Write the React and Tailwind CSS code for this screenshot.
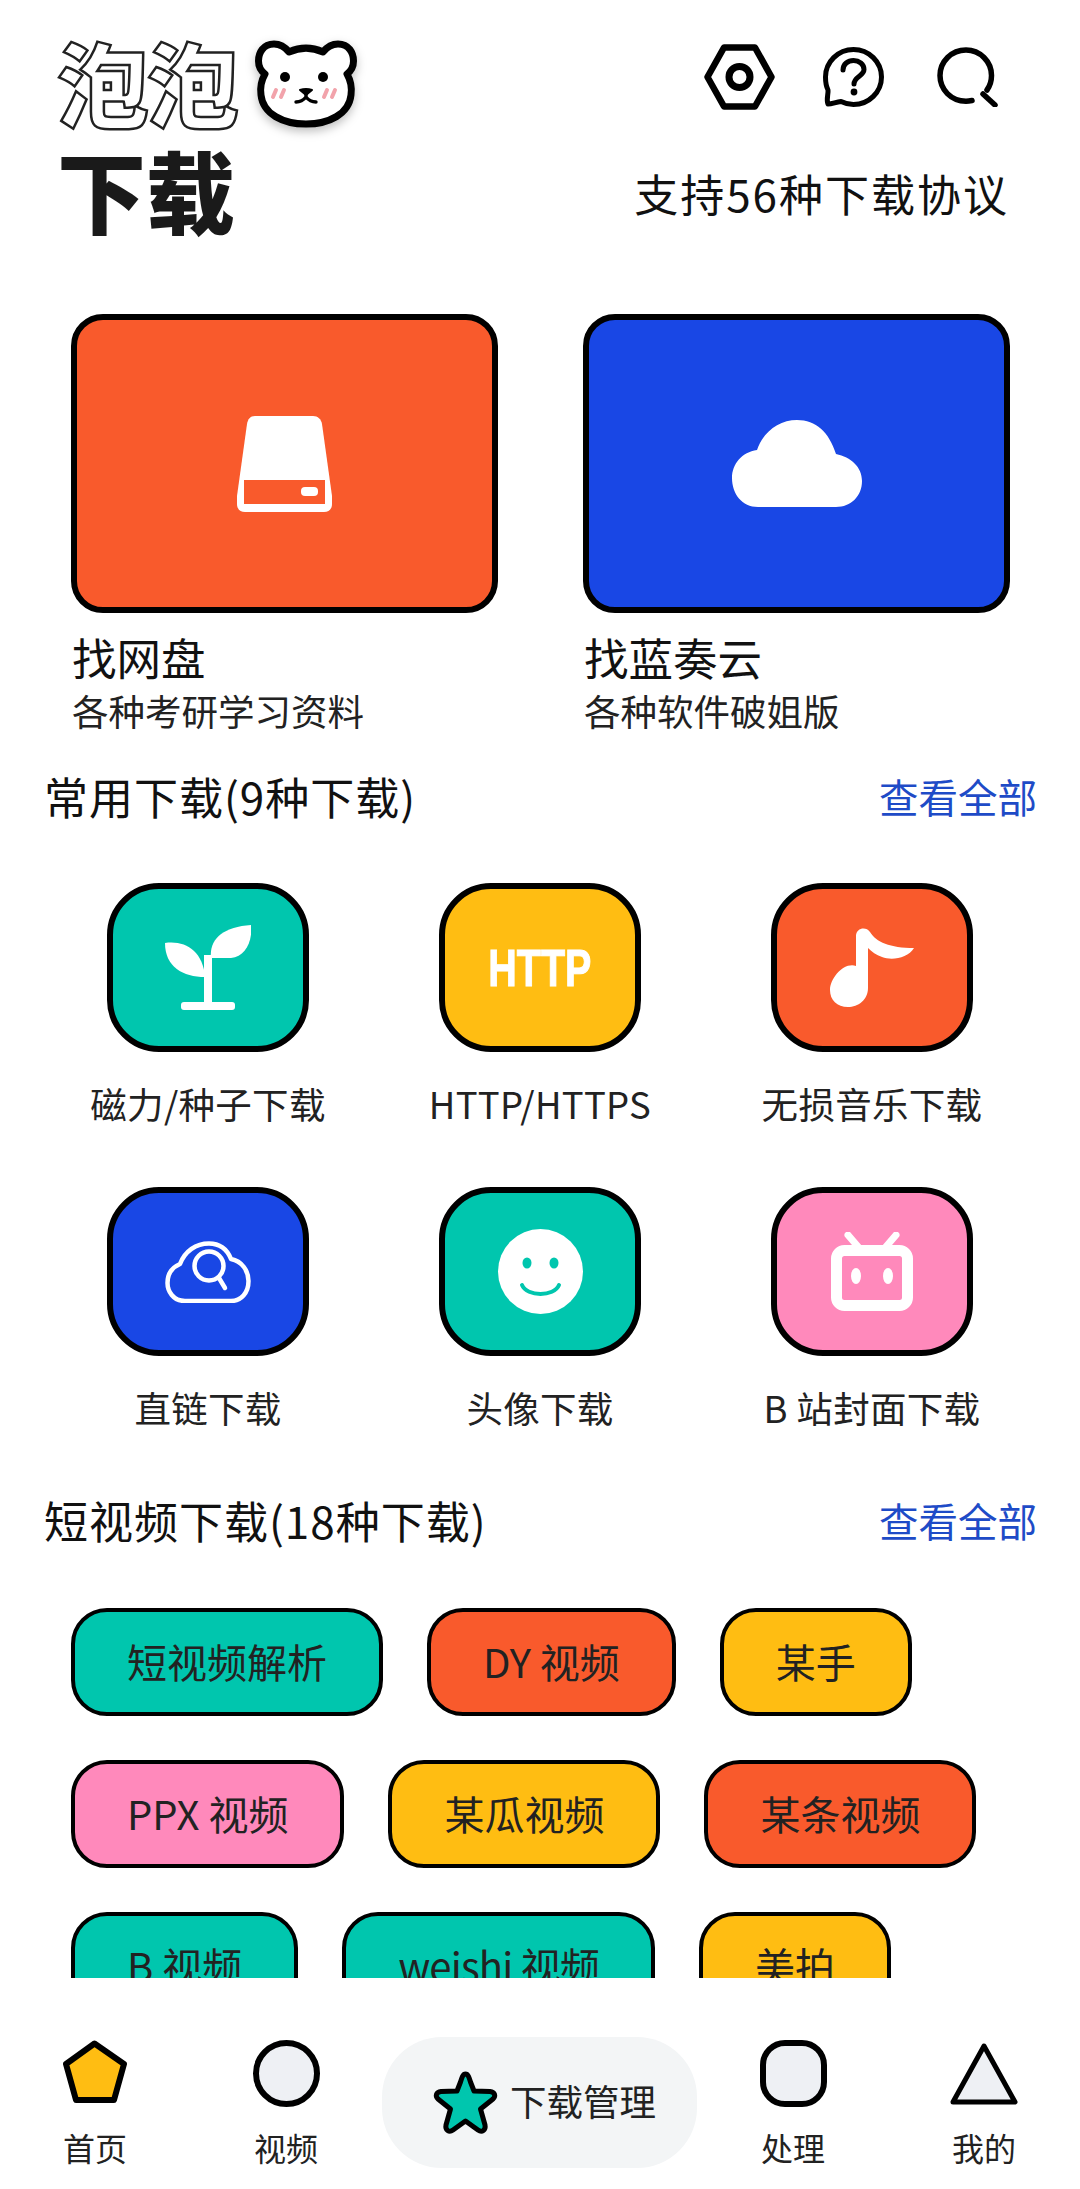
import React from "react";

const TEAL = "bg-[#00c6ae]";
const ORANGE = "bg-[#f95a2c]";
const BLUE = "bg-[#1947e5]";
const YELLOW = "bg-[#ffbd12]";
const PINK = "bg-[#ff89bb]";

function Bear() {
  return (
    <svg width="102" height="88" viewBox="0 0 102 88" className="drop-shadow-[0_4px_5px_rgba(0,0,0,0.25)]">
      <path d="M19 4C8 4 3.500 13 3.500 21C3.500 27 6 31 10 34C6 41 5 48 6 55C8 74 28 84 51 84C74 84 94 74 96 55C97 48 96 41 92 34C96 31 98.500 27 98.500 21C98.500 13 94 4 83 4C77 4 72 7 68 12C57 7 45 7 34 12C30 7 25 4 19 4Z" fill="#fff" stroke="#000" strokeWidth="7" strokeLinejoin="round" />
      <circle cx="30" cy="37" r="5" fill="#000" />
      <circle cx="68" cy="37" r="5" fill="#000" />
      <path d="M18 57L21 50M26 57L29 50M69 57L72 50M77 57L80 50" stroke="#f2a3ab" strokeWidth="4" strokeLinecap="round" />
      <path d="M45 50Q51 48 57 50L51 55Z" fill="#000" stroke="#000" strokeWidth="2" strokeLinejoin="round" />
      <path d="M51 54V57M41 62Q47 62 51 57Q55 62 61 62" fill="none" stroke="#000" strokeWidth="3.400" strokeLinecap="round" />
    </svg>
  );
}

function HexIcon() {
  return (
    <svg width="71" height="66" viewBox="0 0 71 66">
      <path d="M20 3.500H51L67.500 33L51 62.500H20L3.500 33Z" fill="none" stroke="#000" strokeWidth="6.500" strokeLinejoin="round" />
      <circle cx="35.500" cy="33" r="10.500" fill="none" stroke="#000" strokeWidth="7" />
    </svg>
  );
}

function HelpIcon() {
  return (
    <svg width="61" height="60" viewBox="0 0 61 60">
      <path d="M5 57C3 52 5.500 47 5 43C3 39 2.500 35 2.500 30C2.500 15 15 2.500 30.500 2.500C46 2.500 58.500 15 58.500 30C58.500 45 46 57.500 30.500 57.500C26 57.500 22 56.500 18 54.500C13 55 9 57 5 57Z" fill="none" stroke="#000" strokeWidth="5" strokeLinejoin="round" />
      <path d="M20 23C20 17 25 13.500 30.500 13.500C36 13.500 41 17 41 22.500C41 29 31 29.500 31 37" fill="none" stroke="#000" strokeWidth="5" strokeLinecap="round" />
      <circle cx="31" cy="45" r="3.400" fill="#000" />
    </svg>
  );
}

function SearchIcon() {
  return (
    <svg width="62" height="60" viewBox="0 0 62 60">
      <path d="M35 53.500C32.500 54 31 54.200 29 54.200C14 54.200 3 42.500 3 28.600C3 14.500 14.500 3 29 3C43 3 54.500 14.500 54.500 28.600C54.500 34 53 39 50 43" fill="none" stroke="#000" strokeWidth="5.500" strokeLinecap="round" />
      <path d="M46 47L58 58" fill="none" stroke="#000" strokeWidth="5.500" strokeLinecap="round" />
    </svg>
  );
}

function DiskIcon() {
  return (
    <svg width="95" height="96" viewBox="0 0 95 96">
      <path d="M18 0H76C81 0 84 3 85 8L95 80V88C95 93 92 96 87 96H8C3 96 0 93 0 88V80L10 8C11 3 13 0 18 0Z" fill="#fff" />
      <rect x="7" y="64" width="81" height="24" fill="#f95a2c" />
      <rect x="64" y="71" width="17" height="9" rx="4" fill="#fff" />
    </svg>
  );
}

function CloudIcon() {
  return (
    <svg width="130" height="87" viewBox="0 0 130 87">
      <path d="M26 87C10 87 0 74 0 58C0 44 10 32 25 30C31 12 47 0 65 0C84 0 97 12 104 34C119 37 130 47 130 61C130 76 119 87 104 87Z" fill="#fff" />
    </svg>
  );
}

function SproutIcon() {
  return (
    <svg width="86" height="85" viewBox="0 0 86 85">
      <path d="M46 33C44 14 58 2 86 0C88 16 80 32 66 33Z" fill="#fff" />
      <path d="M0 18C20 15 38 26 40 52C18 52 0 42 0 18Z" fill="#fff" />
      <rect x="39" y="30" width="8" height="50" fill="#fff" />
      <rect x="16" y="77" width="54" height="8" rx="3" fill="#fff" />
    </svg>
  );
}

function NoteIcon() {
  return (
    <svg width="84" height="79" viewBox="0 0 84 79">
      <path d="M26 38L26 8C26 0 36 -2 40 4C46 14 60 20 84 20C78 30 62 33 52 29C46 27 42 24 38 20L38 60C38 72 28 79 18 79C7 79 0 72 0 62C0 50 14 34 26 38Z" fill="#fff" />
    </svg>
  );
}

function CloudSearchIcon() {
  return (
    <svg width="86" height="62" viewBox="0 0 86 62">
      <path d="M20 60C8 60 2.500 50 2.500 42C2.500 32 8 26 15 23C20 10 31 2.500 44 2.500C54 2.500 62 8 66 18C77 20 83.500 30 83.500 40C83.500 52 76 60 66 60Z" fill="none" stroke="#fff" strokeWidth="4.500" strokeLinejoin="round" />
      <circle cx="44" cy="25" r="14.500" fill="none" stroke="#fff" strokeWidth="4.500" />
      <path d="M54 37L60 47" fill="none" stroke="#fff" strokeWidth="4.500" strokeLinecap="round" />
    </svg>
  );
}

function SmileIcon() {
  return (
    <svg width="85" height="85" viewBox="0 0 85 85">
      <circle cx="42.500" cy="42.500" r="42.500" fill="#fff" />
      <ellipse cx="29" cy="34" rx="4.500" ry="5.500" fill="#00c6ae" />
      <ellipse cx="56" cy="34" rx="4.500" ry="5.500" fill="#00c6ae" />
      <path d="M24 56C29 68 56 68 61 56" fill="none" stroke="#00c6ae" strokeWidth="4" strokeLinecap="round" />
    </svg>
  );
}

function BiliIcon() {
  return (
    <svg width="82" height="79" viewBox="0 0 82 79">
      <path d="M17 3L29 17M65 3L53 17" fill="none" stroke="#fff" strokeWidth="7" strokeLinecap="round" />
      <rect x="5.500" y="18.500" width="71" height="55" rx="8" fill="none" stroke="#fff" strokeWidth="11" />
      <ellipse cx="25" cy="44" rx="5" ry="8" fill="#fff" />
      <ellipse cx="57" cy="44" rx="5" ry="8" fill="#fff" />
    </svg>
  );
}

function Feature({ color, title, sub, children }) {
  return (
    <div className="w-[427px]">
      <div className={`h-[299px] rounded-[32px] border-[6px] border-black flex items-center justify-center ${color}`}>
        {children}
      </div>
      <div className="mt-[14px] ml-px text-[44.500px] leading-[60px] text-[#111]">{title}</div>
      <div className="ml-px text-[36.500px] leading-[48px] mb-[3px] text-[#222]">{sub}</div>
    </div>
  );
}

function SectionHead({ title }) {
  return (
    <div className="flex items-center justify-between pl-[44px] pr-[43px] h-[60px]">
      <span className="text-[44px] leading-[60px] tracking-[1px] text-[#111]">{title}</span>
      <span className="text-[39.500px] text-[#1e4bc7]">查看全部</span>
    </div>
  );
}

function Tile({ color, label, children }) {
  return (
    <div className="flex flex-col items-center">
      <div className={`w-[202px] h-[169px] rounded-[52px] border-[6px] border-black flex items-center justify-center ${color}`}>
        {children}
      </div>
      <div className="mt-[27px] mb-px text-[36.500px] tracking-[0.300px] leading-[50px] text-[#222] whitespace-nowrap">{label}</div>
    </div>
  );
}

function Chip({ color, className = "", children }) {
  return (
    <div className={`h-[108px] px-[52px] pb-[3px] rounded-[36px] border-[4px] border-black flex items-center text-[40px] text-[#222] whitespace-nowrap ${color} ${className}`}>
      {children}
    </div>
  );
}

function NavItem({ label, className, children }) {
  return (
    <div className={`w-[80px] flex flex-col items-center pt-[3px] ${className}`}>
      <div className="h-[67px] flex items-start">{children}</div>
      <div className="mt-[20px] text-[32px] leading-[40px] text-[#222] whitespace-nowrap">{label}</div>
    </div>
  );
}

export default function App() {
  return (
    <div className="w-[1080px] h-[2189px] bg-white overflow-hidden flex flex-col font-['Noto_Sans_CJK_SC','Noto_Sans',sans-serif]">
      <main className="h-[1978px] overflow-hidden">
        <header className="h-[238px] flex justify-between pr-[71px]">
          <div className="pl-[57px] pt-[33px]">
            <div className="flex items-center h-[95px]">
              <span className="text-[92px] leading-[95px] tracking-[-2px] font-black text-white [-webkit-text-stroke:2.500px_#222]">泡泡</span>
              <span className="ml-[18px] mt-[7px]"><Bear /></span>
            </div>
            <div className="mt-[16px] text-[89px] leading-[90px] font-black text-[#1a1a1a]">下载</div>
          </div>
          <div className="flex flex-col items-end pt-[44px]">
            <div className="flex items-center gap-[48px] pr-[10px] h-[66px]">
              <HexIcon />
              <HelpIcon />
              <span className="ml-[5px]"><SearchIcon /></span>
            </div>
            <div className="mt-[53px] text-[44px] leading-[60px] tracking-[2px] text-[#111]">支持56种下载协议</div>
          </div>
        </header>

        <section className="mt-[76px] ml-[71px] flex gap-[85px]">
          <Feature color={ORANGE} title="找网盘" sub="各种考研学习资料"><DiskIcon /></Feature>
          <Feature color={BLUE} title="找蓝奏云" sub="各种软件破姐版"><CloudIcon /></Feature>
        </section>

        <div className="mt-[28px]"><SectionHead title="常用下载(9种下载)" /></div>

        <section className="mt-[57px] ml-[42px] w-[996px] grid grid-cols-3 gap-y-[57px]">
          <Tile color={TEAL} label="磁力/种子下载"><SproutIcon /></Tile>
          <Tile color={YELLOW} label="HTTP/HTTPS">
            <span className="scale-x-[0.76] text-[52px] leading-none font-bold text-white font-['Liberation_Sans',sans-serif] [-webkit-text-stroke:1px_#fff]">HTTP</span>
          </Tile>
          <Tile color={ORANGE} label="无损音乐下载"><NoteIcon /></Tile>
          <Tile color={BLUE} label="直链下载"><CloudSearchIcon /></Tile>
          <Tile color={TEAL} label="头像下载"><SmileIcon /></Tile>
          <Tile color={PINK} label="B 站封面下载"><BiliIcon /></Tile>
        </section>

        <div className="mt-[56px]"><SectionHead title="短视频下载(18种下载)" /></div>

        <section className="mt-[58px] ml-[71px] w-[940px] flex flex-wrap gap-x-[44px] gap-y-[44px]">
          <Chip color={TEAL}>短视频解析</Chip>
          <Chip color={ORANGE}>DY 视频</Chip>
          <Chip color={YELLOW}>某手</Chip>
          <Chip color={PINK}>PPX 视频</Chip>
          <Chip color={YELLOW}>某瓜视频</Chip>
          <Chip color={ORANGE}>某条视频</Chip>
          <Chip color={TEAL}>B 视频</Chip>
          <Chip color={TEAL} className="tracking-[-0.800px]">weishi 视频</Chip>
          <Chip color={YELLOW}>美拍</Chip>
        </section>
      </main>

      <nav className="flex-1 pl-[55px] pt-[59px] flex items-start">
        <NavItem label="首页">
          <svg width="64" height="64" viewBox="0 0 64 64">
            <path d="M31.500 3.500L61 24L51 60H13L3 24Z" fill="#ffbd12" stroke="#000" strokeWidth="6" strokeLinejoin="round" />
          </svg>
        </NavItem>
        <NavItem label="视频" className="ml-[111px]">
          <svg width="67" height="67" viewBox="0 0 67 67">
            <circle cx="33.500" cy="33.500" r="30.500" fill="#eef0f4" stroke="#000" strokeWidth="6" />
          </svg>
        </NavItem>
        <div className="ml-[56px] w-[315px] h-[131px] rounded-[60px] bg-[#f3f5f6] flex items-center pl-[50px] gap-[11px]">
          <svg width="67" height="66" viewBox="0 0 67 66">
            <path d="M33.500 4C36 4 37 7 38.500 12L42 21L58 21.500C63 22 64 26 61 29L48.500 39L53 55C54 60 50 63 46 60L33.500 51L21 60C17 63 13 60 14 55L18.500 39L6 29C3 26 4 22 9 21.500L25 21L28.500 12C30 7 31 4 33.500 4Z" fill="#00c6ae" stroke="#000" strokeWidth="5" strokeLinejoin="round" />
          </svg>
          <span className="text-[36.500px] text-[#222] pb-[2px] whitespace-nowrap">下载管理</span>
        </div>
        <NavItem label="处理" className="ml-[56px]">
          <svg width="67" height="67" viewBox="0 0 67 67">
            <rect x="3" y="3" width="61" height="61" rx="22" fill="#eef0f4" stroke="#000" strokeWidth="6" />
          </svg>
        </NavItem>
        <NavItem label="我的" className="ml-[111px]">
          <svg width="68" height="67" viewBox="0 0 68 67">
            <path d="M34 6L65 62H3Z" fill="#eef0f4" stroke="#000" strokeWidth="5" strokeLinejoin="round" />
          </svg>
        </NavItem>
      </nav>
    </div>
  );
}
